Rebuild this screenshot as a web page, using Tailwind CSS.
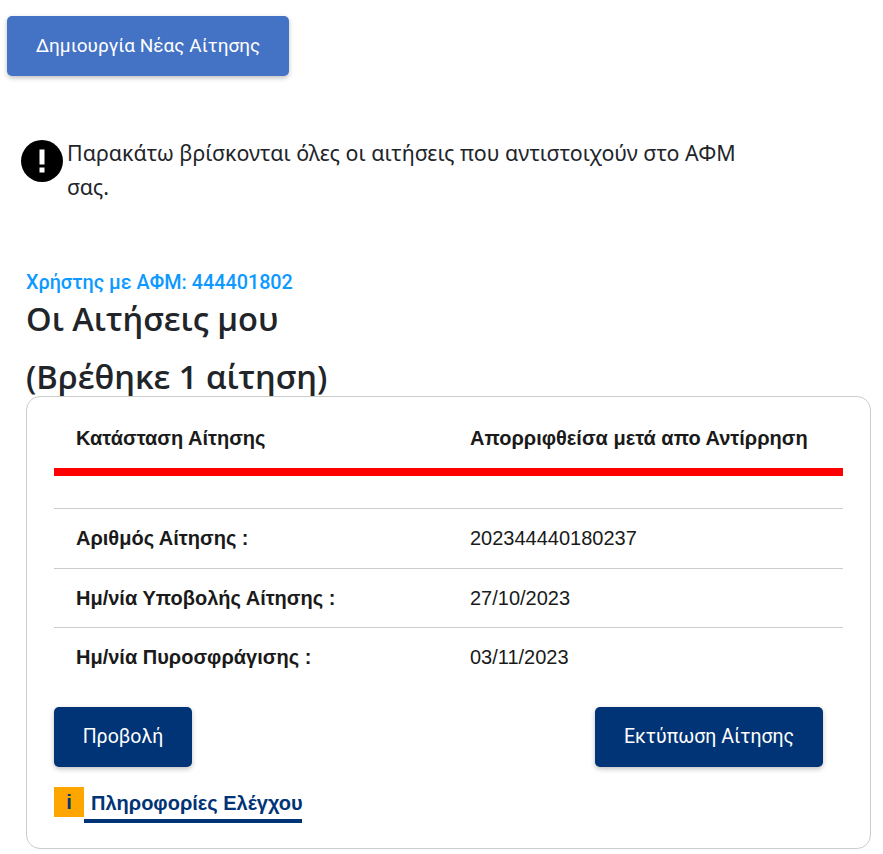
<!DOCTYPE html>
<html lang="el">
<head>
<meta charset="utf-8">
<title>Οι Αιτήσεις μου</title>
<script src="https://cdn.jsdelivr.net/npm/@tailwindcss/browser@4"></script>
</head>
<body class="bg-white font-['Liberation_Sans',sans-serif] text-[#212529]">
<div class="h-[854px] overflow-hidden pt-4 pl-[7px] pr-3">
    <!-- Create button -->
    <button type="button" class="block w-[282px] h-[60px] rounded-[5px] bg-[#4472c4] text-white text-[19px] font-['Roboto',sans-serif] shadow-[0_2px_5px_rgba(0,0,0,0.25)]">Δημιουργία Νέας Αίτησης</button>

    <!-- Notice -->
    <div class="flex mt-16 ml-[14px] w-[730px]">
        <svg class="w-[42px] h-[42px] shrink-0" viewBox="0 0 42 42">
            <circle cx="21" cy="21" r="21" fill="#000"/>
            <rect x="18.5" y="9.5" width="5" height="15" fill="#fff"/>
            <rect x="18.5" y="27.5" width="5" height="5" fill="#fff"/>
        </svg>
        <p class="ml-1 text-[21.4px] leading-[34px] font-['Noto_Sans',sans-serif] text-[#212529] -mt-[4px]">Παρακάτω βρίσκονται όλες οι αιτήσεις που αντιστοιχούν στο ΑΦΜ σας.</p>
    </div>

    <!-- Title -->
    <div class="ml-[19px] mt-[67px]">
        <p class="text-[19.8px] leading-6 font-medium font-['Roboto',sans-serif] text-[#0d99ff]">Χρήστης με ΑΦΜ: 444401802</p>
        <h1 class="text-[32.6px] leading-[58px] font-semibold font-['Open_Sans',sans-serif] text-[#212529] -mt-[5px]">Οι Αιτήσεις μου<br>(Βρέθηκε 1 αίτηση)</h1>
    </div>

    <!-- Card -->
    <div class="ml-[19px] w-[845px] h-[453px] -mt-[10px] relative bg-white border border-[#cccccc] rounded-[14px] px-[27px]">
        <div class="flex items-center h-[61px] pt-[10px] box-content border-b-8 border-[#ff0000] pl-[22px] font-bold text-xl text-[#1a1a1a]">
            <span class="w-[394px]">Κατάσταση Αίτησης</span>
            <span>Απορριφθείσα μετά απο Αντίρρηση</span>
        </div>
        <div class="mt-8 border-t border-[#cccccc]">
            <div class="flex items-center h-[60px] pb-[2px] pl-[22px] border-b border-[#cccccc] text-xl text-[#1a1a1a]">
                <span class="w-[394px] font-bold">Αριθμός Αίτησης :</span>
                <span>202344440180237</span>
            </div>
            <div class="flex items-center h-[59px] pb-[1px] pl-[22px] border-b border-[#cccccc] text-xl text-[#1a1a1a]">
                <span class="w-[394px] font-bold">Ημ/νία Υποβολής Αίτησης :</span>
                <span>27/10/2023</span>
            </div>
            <div class="flex items-center h-[59px] pb-[1px] pl-[22px] text-xl text-[#1a1a1a]">
                <span class="w-[394px] font-bold">Ημ/νία Πυροσφράγισης :</span>
                <span>03/11/2023</span>
            </div>
        </div>
        <div class="flex justify-between mt-5 pr-5">
            <button type="button" class="w-[138px] h-[60px] rounded-[5px] bg-[#003476] text-white text-[19.5px] font-['Roboto',sans-serif] shadow-[0_2px_5px_rgba(0,0,0,0.25)]">Προβολή</button>
            <button type="button" class="w-[228px] h-[60px] rounded-[5px] bg-[#003476] text-white text-[19.5px] font-['Roboto',sans-serif] shadow-[0_2px_5px_rgba(0,0,0,0.25)]">Εκτύπωση Αίτησης</button>
        </div>
        <div class="flex mt-5">
            <div class="w-[30px] h-[30px] bg-[#ffa500] text-[#003476] font-bold text-xl flex items-center justify-center">i</div>
            <a class="block w-[218px] h-[36px] pl-[7px] border-b-4 border-[#003476] text-[#003476] font-bold text-xl leading-[32px] whitespace-nowrap">Πληροφορίες Ελέγχου</a>
        </div>
    </div>
</div>
</body>
</html>
